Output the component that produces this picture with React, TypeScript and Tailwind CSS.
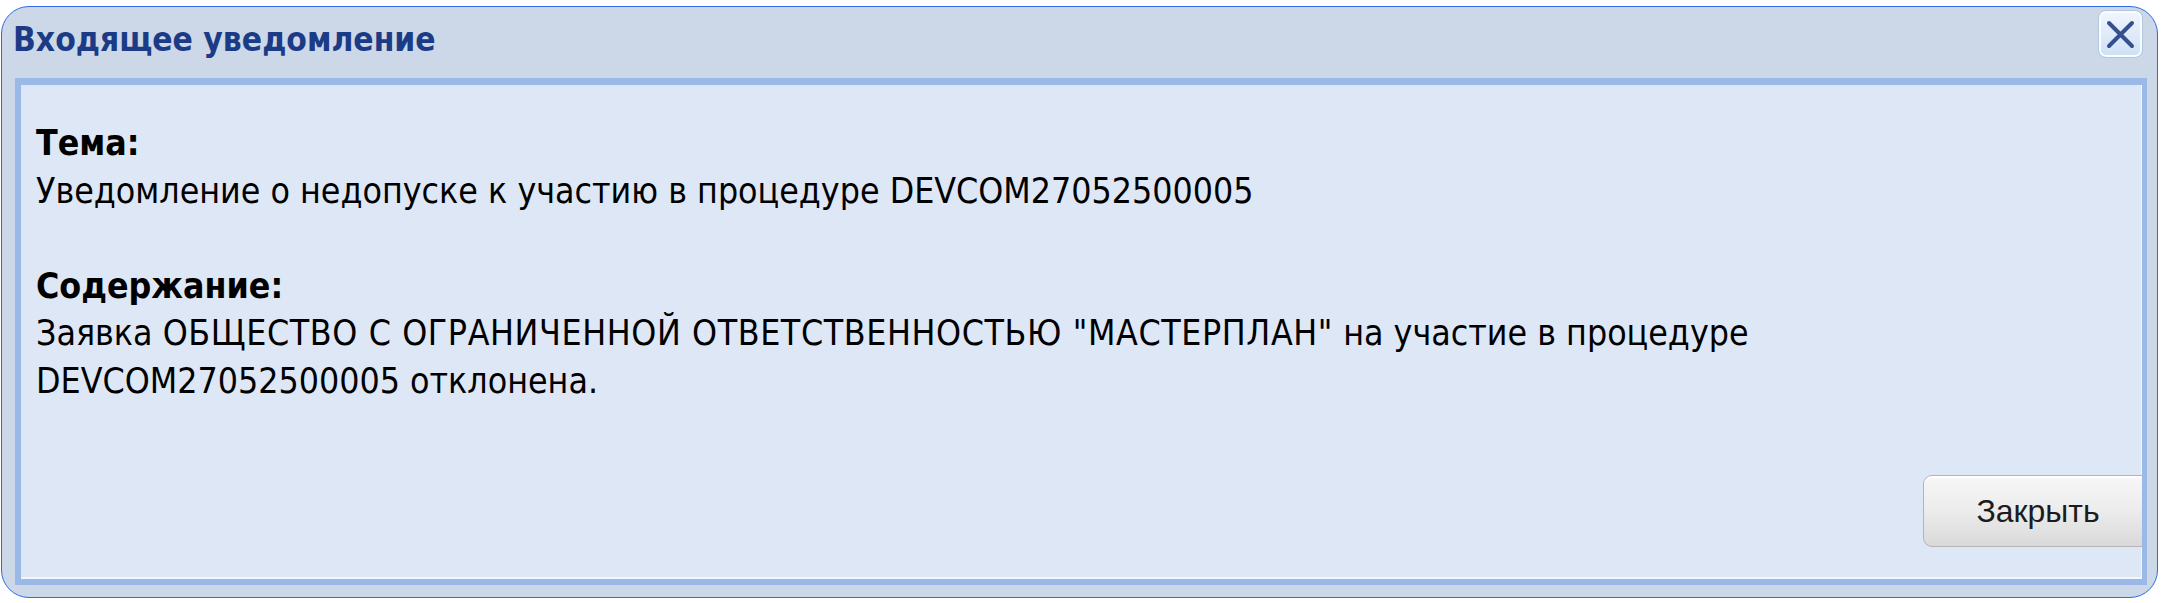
const BODY_FONT = "font-['DejaVu_Sans_Condensed','DejaVu_Sans',sans-serif]";

function CloseIcon() {
    return (
        <svg width='29' height='29' viewBox='0 0 29 29' fill='none'>
            <path d='M3 3 L26 26 M26 3 L3 26' stroke='#34508f' strokeWidth='4' strokeLinecap='round' />
        </svg>
    );
}

export default function App() {
    return (
        <div className='w-[2161px] h-[603px] bg-white pl-[1px] pt-[6px]'>
            {/* Window frame */}
            <div className='w-[2157px] h-[592px] rounded-[28px] border border-[#2f6ae4] bg-[#ccd8e7] flex flex-col overflow-hidden'>
                {/* Title bar */}
                <div className='h-[71px] shrink-0 flex items-start justify-between'>
                    <h1
                        className={`mt-[13px] ml-[11px] text-[33.3px] leading-[40px] font-bold text-[#1b3b86] ${BODY_FONT}`}
                    >
                        Входящее уведомление
                    </h1>
                    <button className='mt-[3px] mr-[14px] w-[45px] h-[48px] rounded-[8px] border border-[#b3c7de] bg-gradient-to-b from-[#f0f6fe] to-[#cfe0f5] shadow-[inset_0_0_0_2px_#f8fbff] flex items-center justify-center'>
                        <CloseIcon />
                    </button>
                </div>

                {/* Content panel */}
                <div className='ml-[13px] mr-[10px] mb-[12px] flex-1 flex flex-col justify-between overflow-hidden bg-[#dee7f6] border-[#9ab9e7] border-t-[7px] border-l-[6px] border-r-[5px] border-b-[6px] shadow-[inset_0_-2px_0_#f2f6fd,inset_-1px_0_0_#f2f6fd]'>
                    <div className={`pt-[34px] pl-[15px] text-[35.4px] leading-[47.5px] text-black whitespace-nowrap ${BODY_FONT}`}>
                        <div className='font-bold'>Тема:</div>
                        <div>Уведомление о недопуске к участию в процедуре DEVCOM27052500005</div>
                        <div className='h-[47.5px]' />
                        <div className='font-bold'>Содержание:</div>
                        <div>
                            Заявка{' '}
                            <span className='tracking-[0.6px]'>
                                ОБЩЕСТВО С ОГРАНИЧЕННОЙ ОТВЕТСТВЕННОСТЬЮ "МАСТЕРПЛАН"
                            </span>{' '}
                            на участие в процедуре
                            <br />
                            DEVCOM27052500005 отклонена.
                        </div>
                    </div>

                    <div className='flex justify-end pb-[32px]'>
                        <button className="w-[230px] h-[72px] -mr-[11px] rounded-[9px] border border-[#b4b4b4] bg-gradient-to-b from-[#f7f7f7] via-[#ececec] to-[#d9d9d9] shadow-[inset_0_2px_0_#ffffff] text-[32px] text-[#1c1c1c] font-['Liberation_Sans',Arial,sans-serif]">
                            Закрыть
                        </button>
                    </div>
                </div>
            </div>
        </div>
    );
}
